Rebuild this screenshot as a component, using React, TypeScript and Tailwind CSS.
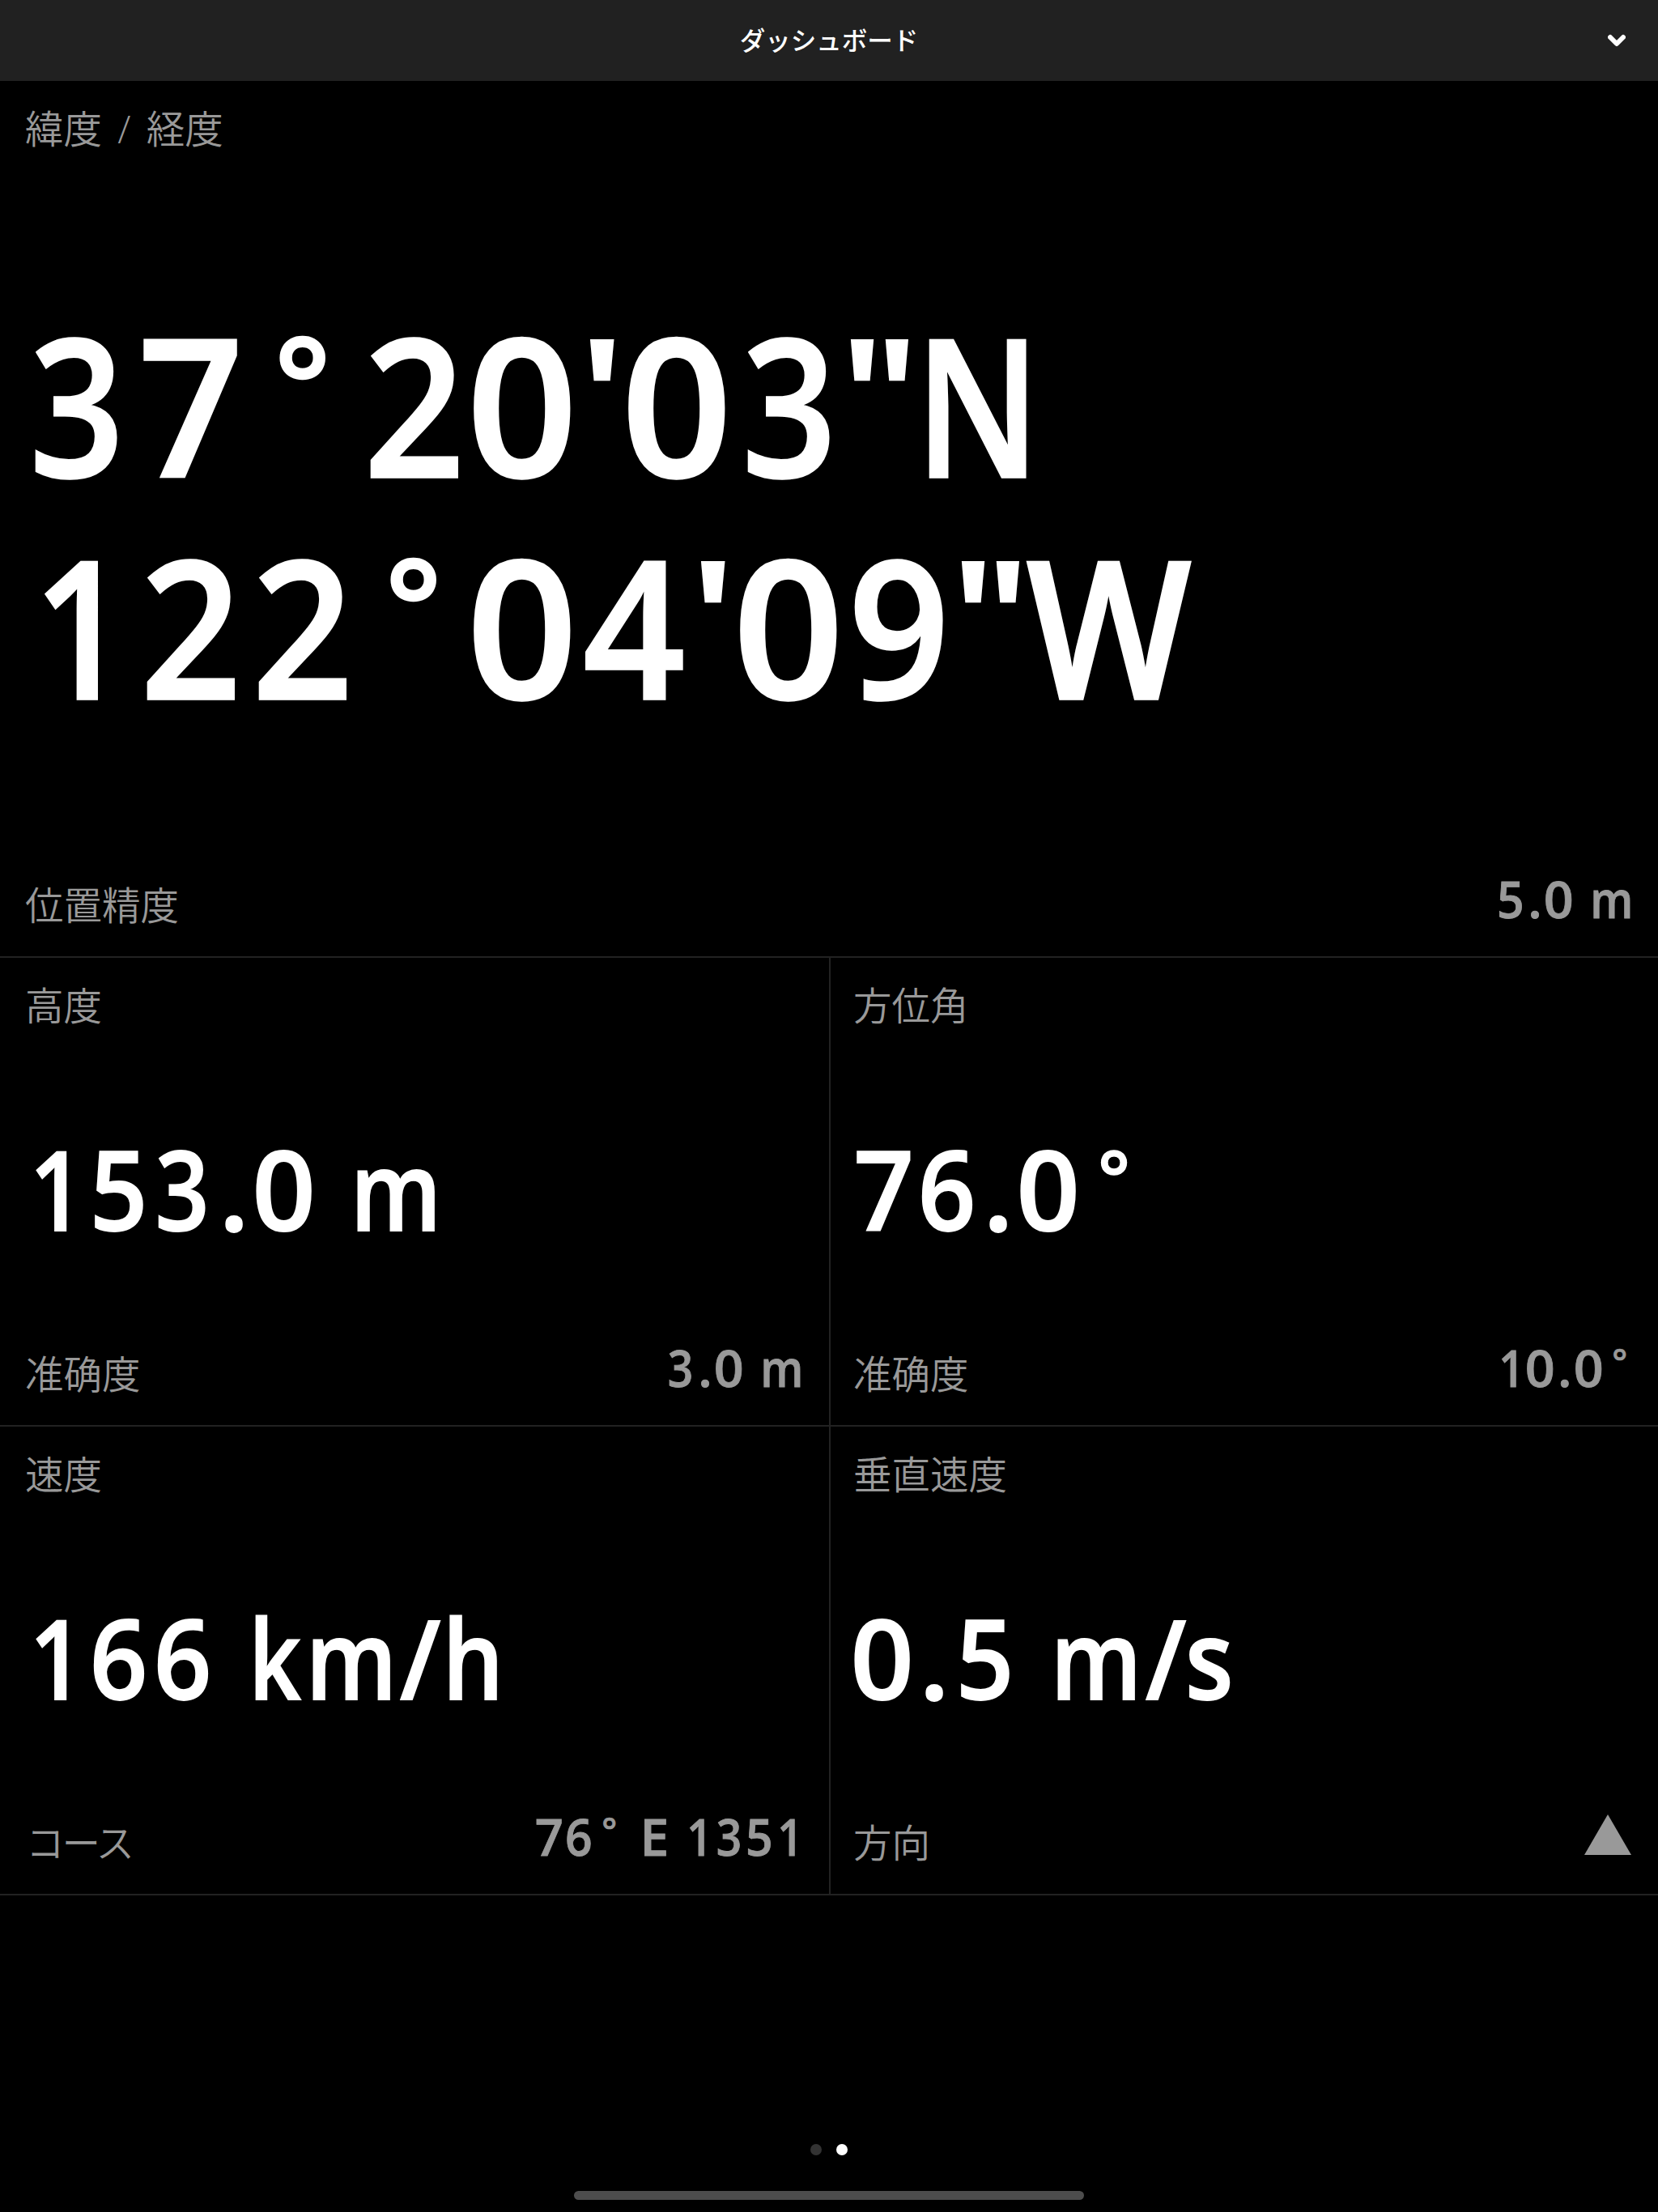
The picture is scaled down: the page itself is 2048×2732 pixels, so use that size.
import React from "react";
import clsx from "clsx";

interface ReadoutProps {
    value: string
    className?: string
}

interface LabelProps {
    text: string
    className?: string
}

interface CellProps {
    label: React.ReactNode
    value: string
    footerLabel: React.ReactNode
    footer: React.ReactNode
    className?: string
}

// advance width and condensed shape of every character the readouts use
const glyphs: Record<string, { box: string, shape: string }> = {
    "0": {box: "w-[0.5825em]", shape: "scale-x-[1.01] -translate-x-[0.016em]"},
    "1": {box: "w-[0.5825em]", shape: "scale-x-[0.86] translate-x-[0.01em]"},
    "2": {box: "w-[0.5825em]", shape: "scale-x-[0.92]"},
    "3": {box: "w-[0.5825em]", shape: "scale-x-[0.86] -translate-x-[0.012em]"},
    "4": {box: "w-[0.5825em]", shape: "scale-x-[0.93] -translate-x-[0.015em]"},
    "5": {box: "w-[0.5825em]", shape: "scale-x-[0.92] -translate-x-[0.008em]"},
    "6": {box: "w-[0.5825em]", shape: "scale-x-[0.92] -translate-x-[0.008em]"},
    "7": {box: "w-[0.5825em]", shape: "scale-x-[0.96]"},
    "9": {box: "w-[0.5825em]", shape: "scale-x-[0.92] -translate-x-[0.018em]"},
    "°": {box: "w-[0.5825em]", shape: "scale-[0.69] -translate-y-[0.113em]"},
    "'": {box: "w-[0.224em]", shape: "origin-[50%_22%] scale-x-[0.98] scale-y-[0.8] -translate-x-[0.005em]"},
    '"': {box: "w-[0.346em]", shape: "origin-[50%_22%] scale-x-[0.94] scale-y-[0.8] -translate-x-[0.005em]"},
    ".": {box: "w-[0.353em]", shape: "-translate-x-[0.005em]"},
    " ": {box: "w-[0.29em]", shape: ""},
    "/": {box: "w-[0.39em]", shape: "scale-x-[0.95] -translate-x-[0.01em]"},
    "m": {box: "w-[0.868em]", shape: "scale-x-[0.87] -translate-x-[0.012em]"},
    "k": {box: "w-[0.53em]", shape: "scale-x-[0.83] -translate-x-[0.01em]"},
    "h": {box: "w-[0.59em]", shape: "scale-x-[0.88] -translate-x-[0.02em]"},
    "s": {box: "w-[0.413em]", shape: "scale-x-[0.9] -translate-x-[0.01em]"},
    "E": {box: "w-[0.566em]", shape: ""},
    "N": {box: "w-[0.67em]", shape: "scale-x-[0.83]"},
    "W": {box: "w-[0.882em]", shape: "scale-x-[0.91]"},
}

const Readout: React.FC<ReadoutProps> = ({value, className}) => {
    return(
        <div className={clsx("flex whitespace-pre font-['Open_Sans','Noto_Sans',sans-serif] font-semibold [-webkit-text-stroke:0.014em_currentColor]", className)}>
            {value.split("").map((char, i) => (
                <span key={i} className={clsx("flex justify-center", glyphs[char]?.box)}>
                    <span className={clsx("block shrink-0", glyphs[char]?.shape)}>{char}</span>
                </span>
            ))}
        </div>
    )
}

const Label: React.FC<LabelProps> = ({text, className}) => (
    <div className={clsx("text-[47.5px] leading-[60px] font-[350] text-[#999]", className)}>{text}</div>
)

const Small: React.FC<{value: string}> = ({value}) => (
    <Readout value={value} className="mb-[6px] text-[64px] leading-[60px] text-[#999]"/>
)

const Cell: React.FC<CellProps> = ({label, value, footerLabel, footer, className}) => {
    return(
        <div className={clsx("flex h-[579px] flex-col justify-between border-b-2 border-[#222] pt-[27px] pb-[35px]", className)}>
            {label}
            <Readout value={value} className="-ml-[2px] pt-[8px] text-[135.5px] leading-[160px] text-white"/>
            <div className="flex h-[67px] items-end justify-between">
                {footerLabel}
                {footer}
            </div>
        </div>
    )
}

export default function App() {
    return(
        <div className="flex h-[2732px] w-[2048px] flex-col bg-black font-['Noto_Sans_CJK_JP',sans-serif]">
            <header className="grid h-[100px] shrink-0 grid-cols-3 items-center bg-[#212121] px-10 text-white">
                <h1 className="col-start-2 mb-[4px] text-center text-[31.5px] leading-[48px] font-medium">ダッシュボード</h1>
                <svg className="h-4 w-[22px] justify-self-end" viewBox="0 0 22 16" fill="none" stroke="currentColor" strokeWidth="6" strokeLinecap="round" strokeLinejoin="round">
                    <path d="M3 4l8 8 8-8"/>
                </svg>
            </header>

            <section className="flex h-[1083px] shrink-0 flex-col justify-between border-b-2 border-[#222] pt-[29px] pr-[29px] pb-[35px] pl-[31px]">
                <Label text="緯度 / 経度" className="font-['Open_Sans','Noto_Sans_CJK_JP',sans-serif] [word-spacing:7px]"/>
                <div className="-ml-[2px] text-[236.5px] leading-[274px] text-white">
                    <Readout value={`37°20'03"N`}/>
                    <Readout value={`122°04'09"W`}/>
                </div>
                <div className="flex h-[67px] items-end justify-between">
                    <Label text="位置精度"/>
                    <Small value="5.0 m"/>
                </div>
            </section>

            <section className="grid shrink-0 grid-cols-2">
                <Cell
                    label={<Label text="高度"/>}
                    value="153.0 m"
                    footerLabel={<Label text="准确度"/>}
                    footer={<Small value="3.0 m"/>}
                    className="pr-[30px] pl-[31px]"
                />
                <Cell
                    label={<Label text="方位角"/>}
                    value="76.0°"
                    footerLabel={<Label text="准确度"/>}
                    footer={<Small value="10.0°"/>}
                    className="border-l-2 pr-[29px] pl-[28px]"
                />
                <Cell
                    label={<Label text="速度"/>}
                    value="166 km/h"
                    footerLabel={<Label text="コース" className="pl-px tracking-[-3px]"/>}
                    footer={<Small value="76° E 1351"/>}
                    className="pr-[30px] pl-[31px]"
                />
                <Cell
                    label={<Label text="垂直速度"/>}
                    value="0.5 m/s"
                    footerLabel={<Label text="方向"/>}
                    footer={
                        <svg className="mr-1 mb-[13px] h-[50px] w-[58px] fill-[#999]" viewBox="0 0 58 50">
                            <path d="M29 0L58 50H0Z"/>
                        </svg>
                    }
                    className="border-l-2 pr-[29px] pl-[28px]"
                />
            </section>

            <footer className="mt-auto flex flex-col items-center pb-[15px]">
                <div className="mb-[44px] flex gap-[18px]">
                    <span className="size-[14px] rounded-full bg-[#333]"/>
                    <span className="size-[14px] rounded-full bg-white"/>
                </div>
                <div className="h-[11px] w-[630px] rounded-full bg-[#4d4d4d]"/>
            </footer>
        </div>
    )
}
